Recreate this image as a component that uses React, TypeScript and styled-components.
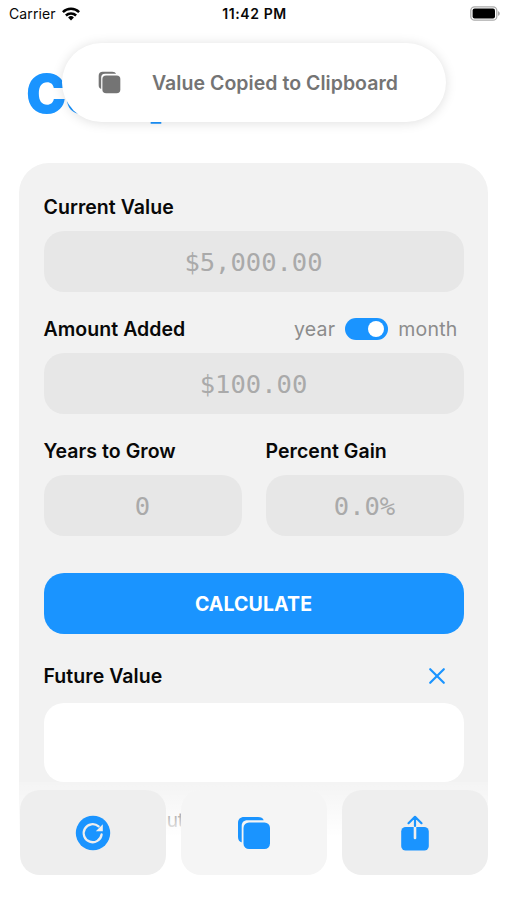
import React from "react";
import styled, { createGlobalStyle } from "styled-components";

const BLUE = "#1a94ff";

const GlobalStyle = createGlobalStyle`
  * { box-sizing: border-box; }
  html, body { margin: 0; background: #fff; overflow: hidden; }
  body { font-family: Inter, "Liberation Sans", sans-serif; color: #080808; }
  button, input { font: inherit; border: 0; padding: 0; margin: 0; outline: 0; }
`;

const Screen = styled.main`
  position: relative;
  width: 507px;
  height: 900px;
  overflow: hidden;
  background: #fff;
`;

const StatusBar = styled.header`
  display: grid;
  grid-template-columns: 1fr auto 1fr;
  align-items: center;
  height: 27px;
  padding: 0 7px 0 9px;
  font-size: 14px;
`;

const Carrier = styled.span`
  display: flex;
  align-items: center;
  gap: 6px;
  letter-spacing: 0.1px;
`;

const Clock = styled.span`
  font-weight: 600;
  letter-spacing: 0.6px;
`;

const BatterySlot = styled.span`
  display: flex;
  justify-content: flex-end;
`;

const Title = styled.h1`
  margin: 0;
  height: 136px;
  padding: 33px 0 0 26px;
  font-size: 54px;
  line-height: 68px;
  font-weight: 900;
  letter-spacing: -1px;
  color: ${BLUE};
`;

const Panel = styled.section`
  display: flex;
  flex-direction: column;
  width: 469px;
  height: 737px;
  margin-left: 19px;
  padding: 29px 24.5px 0;
  border-radius: 30px 30px 0 0;
  background: #f2f2f2;
`;

const Field = styled.div`
  display: flex;
  flex-direction: column;
  flex: 1;
  min-width: 0;
`;

const FieldHead = styled.div`
  display: flex;
  flex: none;
  align-items: center;
  justify-content: space-between;
  height: 30px;
  margin-bottom: 9px;
`;

const Label = styled.label`
  font-size: 19.5px;
  font-weight: 600;
  line-height: 30px;
  letter-spacing: 0.05px;
  white-space: nowrap;
`;

const Input = styled.input`
  width: 100%;
  height: 61px;
  border-radius: 20px;
  background: #e7e7e7;
  text-align: center;
  &&& {
    font-family: "DejaVu Sans Mono", monospace;
    font-size: 25.5px;
  }
  &::placeholder { color: #aaa; opacity: 1; }
`;

const Fields = styled.div`
  display: flex;
  flex-direction: column;
  gap: 22px;
`;

const Pair = styled.div`
  display: flex;
  gap: 24px;
`;

const Period = styled.div`
  display: flex;
  align-items: center;
  gap: 10px;
  padding-right: 6px;
  color: #8c8c8c;
  font-size: 19.5px;
  letter-spacing: 0.2px;
`;

const Toggle = styled.span`
  display: flex;
  justify-content: flex-end;
  width: 43px;
  height: 22px;
  padding: 3px 4px;
  border-radius: 11px;
  background: ${BLUE};
  &::after {
    content: "";
    width: 16px;
    height: 16px;
    border-radius: 50%;
    background: #fff;
  }
`;

const Calculate = styled.button`
  flex: none;
  height: 61px;
  border-radius: 20px;
  background: ${BLUE};
  color: #fff;
  &&& {
    margin: 37px 0 27px;
    padding-top: 1px;
    font-size: 19.5px;
    font-weight: 700;
    letter-spacing: 0.1px;
  }
`;

const Clear = styled.button`
  display: flex;
  background: none;
  &&& { margin-right: 18px; }
`;

const Result = styled.output`
  flex: none;
  height: 79px;
  margin-top: 3px;
  border-radius: 20px;
  background: #fff;
`;

const About = styled.p`
  margin: 24px 0 0;
  padding-left: 87px;
  font-size: 19px;
  line-height: 30px;
  color: #111;
`;

const Toast = styled.div`
  position: absolute;
  top: 43px;
  left: 62px;
  display: flex;
  align-items: center;
  gap: 31px;
  width: 384px;
  height: 79px;
  padding-left: 36px;
  border-radius: 40px;
  background: #fff;
  box-shadow: 0 1px 12px rgba(0, 0, 0, 0.13);
  color: #747474;
  font-size: 19.5px;
  font-weight: 600;
  letter-spacing: 0.04px;
  white-space: nowrap;
`;

const BottomBar = styled.nav`
  position: absolute;
  left: 0;
  right: 0;
  bottom: 0;
  display: grid;
  grid-template-columns: repeat(3, 1fr);
  gap: 15px;
  height: 118px;
  padding: 8px 19px 25px 20px;
  background: linear-gradient(rgba(255, 255, 255, 0.15), #fff 54px);
`;

const Action = styled.button<{ $pale?: boolean }>`
  display: flex;
  align-items: center;
  justify-content: center;
  border-radius: 20px;
  background: ${(p) => (p.$pale ? "#f5f5f5" : "#eee")};
`;

const WifiIcon = () => (
  <svg width="18" height="14" viewBox="0 0 18 14" fill="none" stroke="#000" strokeWidth="2.5">
    <path d="M.9 5.2a11.5 11.5 0 0 1 16.2 0" />
    <path d="M3.9 8.5a7.3 7.3 0 0 1 10.2 0" />
    <path d="M9 13.5 6.1 10.5a4.2 4.2 0 0 1 5.8 0Z" fill="#000" stroke="none" />
  </svg>
);

const BatteryIcon = () => (
  <svg width="31" height="15" viewBox="0 0 31 15">
    <rect x="1.8" y=".8" width="26" height="13.4" rx="3.8" fill="#fff" stroke="#aaa" strokeWidth="1.3" />
    <rect x="3.6" y="2.6" width="22.4" height="9.8" rx="2" fill="#000" />
    <path d="M29 5.2c2.4.7 2.4 3.9 0 4.6Z" fill="#aaa" />
  </svg>
);

const CopyIcon = ({ size, color }: { size: number; color: string }) => (
  <svg width={size} height={size} viewBox="0 0 34 34" fill={color}>
    <path d="M5 26.5C2.500 26 1 24 1 21V7c0-3.700 2.300-6 6-6h14c3 0 5 1.200 5.700 3.200H10.500C6.500 4.200 4.700 6.500 4.700 10v16.500Z" />
    <rect x="6.500" y="6.500" width="26.500" height="26.500" rx="5.500" />
  </svg>
);

const RefreshIcon = () => (
  <svg width="36" height="36" viewBox="0 0 36 36">
    <circle cx="18" cy="18" r="17.200" fill={BLUE} />
    <path d="M26.600 19.500a9 9 0 1 1-3-8.100" fill="none" stroke="#eee" strokeWidth="2.300" strokeLinecap="round" />
    <path d="M27.800 9.300v7h-7Z" fill="#eee" />
  </svg>
);

const ShareIcon = () => (
  <svg width="30" height="36" viewBox="0 0 30 36" fill="none" strokeLinecap="round" strokeLinejoin="round">
    <rect x="1.200" y="12" width="27.600" height="23.500" rx="4.500" fill={BLUE} />
    <path d="M15 12v11" stroke="#eee" strokeWidth="2.600" />
    <path d="M15 11V2M8.500 8.200 15 1.800l6.500 6.400" stroke={BLUE} strokeWidth="2.200" />
  </svg>
);

const CloseIcon = () => (
  <svg width="18" height="18" viewBox="0 0 18 18" stroke={BLUE} strokeWidth="2.200" strokeLinecap="round">
    <path d="m2.200 2.200 13.600 13.600M15.800 2.200 2.200 15.800" />
  </svg>
);

export default function App() {
  return (
    <Screen>
      <GlobalStyle />
      <StatusBar>
        <Carrier>Carrier <WifiIcon /></Carrier>
        <Clock>11:42 PM</Clock>
        <BatterySlot><BatteryIcon /></BatterySlot>
      </StatusBar>
      <Title>Compound</Title>
      <Panel>
        <Fields>
          <Field>
            <FieldHead><Label>Current Value</Label></FieldHead>
            <Input placeholder="$5,000.00" />
          </Field>
          <Field>
            <FieldHead>
              <Label>Amount Added</Label>
              <Period>year<Toggle />month</Period>
            </FieldHead>
            <Input placeholder="$100.00" />
          </Field>
          <Pair>
            <Field>
              <FieldHead><Label>Years to Grow</Label></FieldHead>
              <Input placeholder="0" />
            </Field>
            <Field>
              <FieldHead><Label>Percent Gain</Label></FieldHead>
              <Input placeholder="0.0%" />
            </Field>
          </Pair>
        </Fields>
        <Calculate>CALCULATE</Calculate>
        <FieldHead>
          <Label>Future Value</Label>
          <Clear aria-label="Clear"><CloseIcon /></Clear>
        </FieldHead>
        <Result />
        <About>About</About>
      </Panel>
      <BottomBar>
        <Action aria-label="Reset"><RefreshIcon /></Action>
        <Action aria-label="Copy" $pale><CopyIcon size={34} color={BLUE} /></Action>
        <Action aria-label="Share"><ShareIcon /></Action>
      </BottomBar>
      <Toast><CopyIcon size={23} color="#747474" />Value Copied to Clipboard</Toast>
    </Screen>
  );
}
